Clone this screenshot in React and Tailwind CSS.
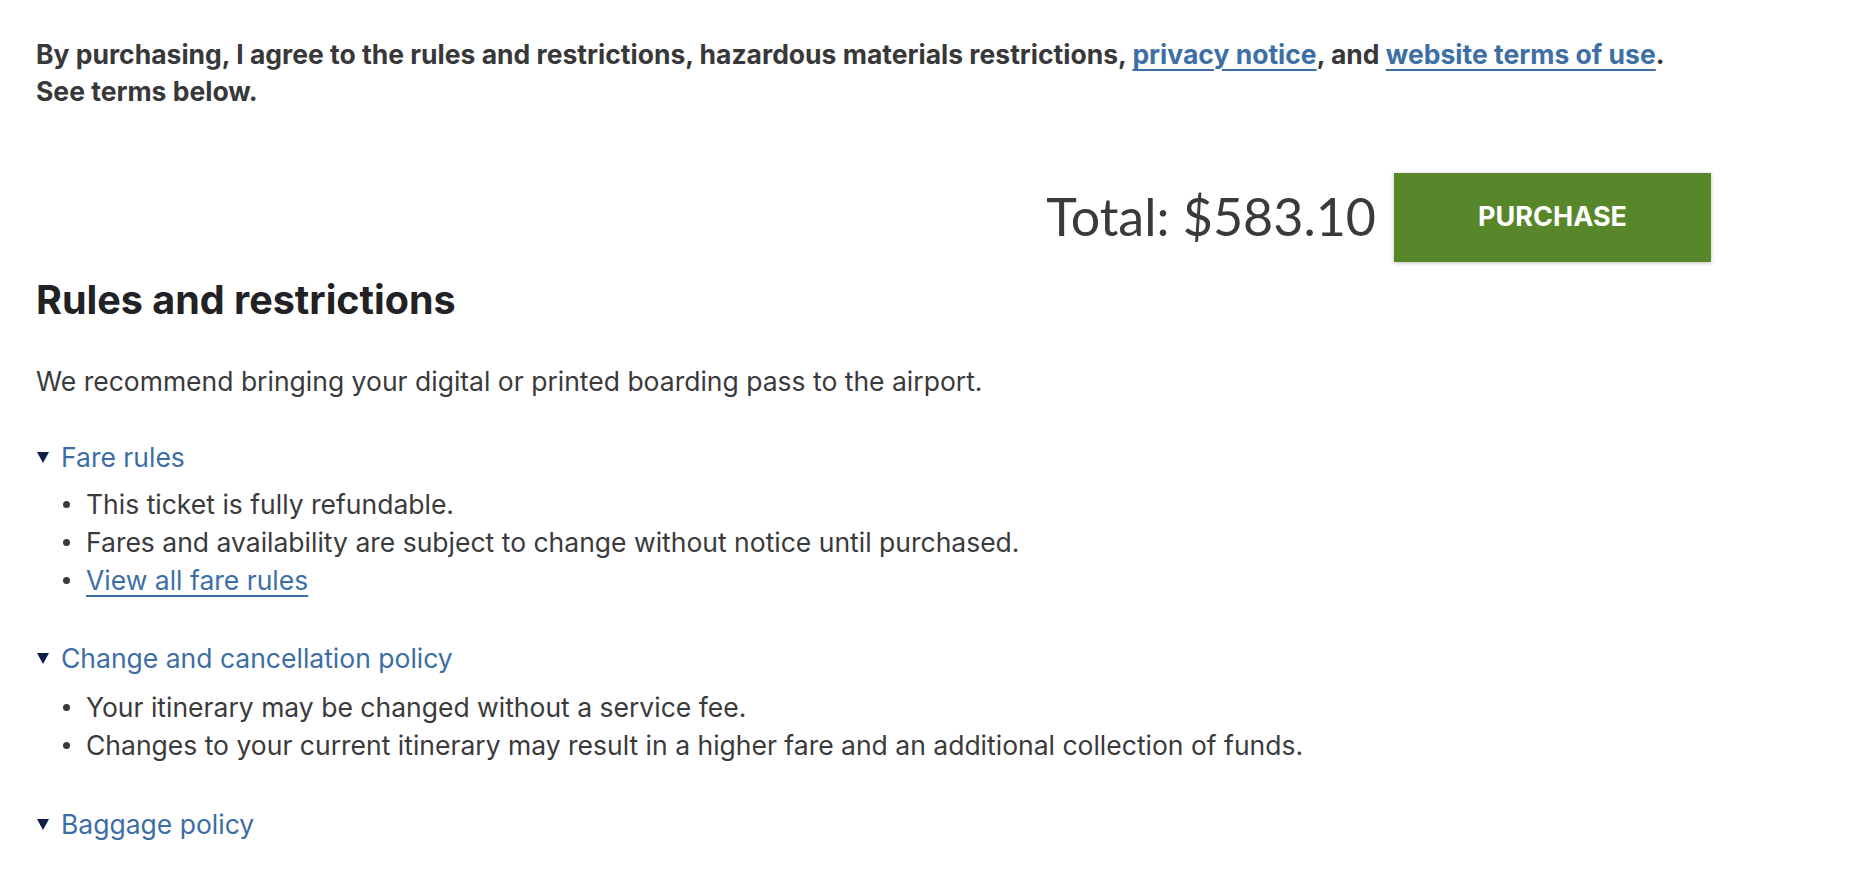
const font = { fontFamily: "Inter, 'Noto Sans', sans-serif" };

const Caret = () => (
  <svg width="12" height="11" viewBox="0 0 12 11" className="shrink-0">
    <path d="M0 0 L12 0 L6 11 Z" fill="#0f1d4a" />
  </svg>
);

const Bullet = ({ children }) => (
  <li className="flex items-center">
    <span className="w-[7px] h-[7px] rounded-full bg-[#3a3a3c] mr-[16px] shrink-0" />
    <span>{children}</span>
  </li>
);

const Section = ({ title, items, className = "", listClass = "mt-[11px]" }) => (
  <div className={className}>
    <div className="flex items-center gap-[12px] pl-[1px]">
      <Caret />
      <span className="text-[#3c6ea6] text-[26.5px] leading-[37px]">{title}</span>
    </div>
    {items && (
      <ul className={`pl-[27px] text-[26.5px] leading-[38px] text-[#3a3a3c] ${listClass}`}>
        {items.map((it, i) => (
          <Bullet key={i}>{it}</Bullet>
        ))}
      </ul>
    )}
  </div>
);

export default function App() {
  return (
    <div className="bg-white min-h-screen px-[36px] pt-[36px] text-[#3a3a3c]" style={font}>
      <div className="w-[1675px]">
        <p className="font-bold text-[26.5px] leading-[37px] text-[#38383a]">
          By purchasing, I agree to the rules and restrictions, hazardous materials restrictions,{" "}
          <a href="#" className="text-[#3d6fa6] underline underline-offset-[5px] decoration-2">privacy notice</a>, and{" "}
          <a href="#" className="text-[#3d6fa6] underline underline-offset-[5px] decoration-2">website terms of use</a>.
          <br />
          See terms below.
        </p>

        <div className="flex justify-end items-center gap-[18px] mt-[63px]">
          <span className="text-[52px] leading-none text-[#3a3a3c] -mt-[3px]" style={{ fontFamily: "Lato, sans-serif" }}>
            Total: $583.10
          </span>
          <button className="w-[317px] h-[89px] bg-[#58862b] text-white font-bold text-[27px] shadow-[0_1px_4px_rgba(0,0,0,0.25)]">
            PURCHASE
          </button>
        </div>

        <h2 className="font-bold text-[39.5px] leading-[44px] text-[#222224] mt-[16px]">
          Rules and restrictions
        </h2>

        <p className="text-[26.5px] leading-[37px] mt-[41px]">
          We recommend bringing your digital or printed boarding pass to the airport.
        </p>

        <Section
          className="mt-[39px]"
          listClass="mt-[9px]"
          title="Fare rules"
          items={[
            "This ticket is fully refundable.",
            "Fares and availability are subject to change without notice until purchased.",
            <a href="#" className="text-[#3d6fa6] underline underline-offset-[5px] decoration-2">View all fare rules</a>,
          ]}
        />

        <Section
          className="mt-[41px]"
          title="Change and cancellation policy"
          items={[
            "Your itinerary may be changed without a service fee.",
            "Changes to your current itinerary may result in a higher fare and an additional collection of funds.",
          ]}
        />

        <Section className="mt-[42px]" title="Baggage policy" />
      </div>
    </div>
  );
}
